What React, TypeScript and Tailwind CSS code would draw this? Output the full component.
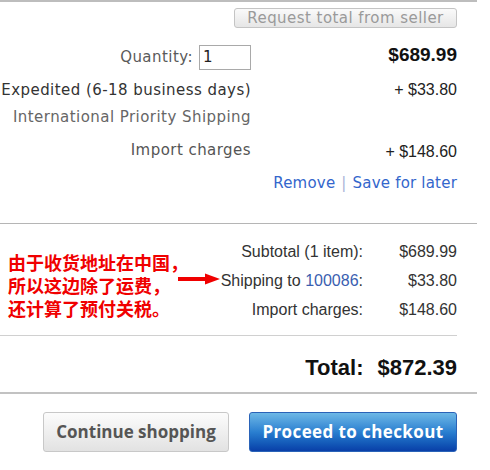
import React from 'react';

const verdana = { fontFamily: '"DejaVu Sans", Verdana, sans-serif', letterSpacing: '0.45px' };
const arial = { fontFamily: '"Liberation Sans", Arial, sans-serif' };

const ItemRow: React.FC<{ left: React.ReactNode; right?: React.ReactNode; className?: string }> = ({ left, right, className }) => (
  <div className={`grid grid-cols-[251px_1fr] items-center ${className ?? ''}`}>
    <div className="flex justify-end items-center text-[15px]" style={verdana}>{left}</div>
    <div className="flex justify-end items-center">{right}</div>
  </div>
);

export default function App() {
  return (
    <div className="w-[490px] h-[470px] bg-white overflow-hidden">
      {/* top rule */}
      <div className="h-[2px] w-[477px] bg-[#bdbdbd]" />

      <div className="pr-[33px]">
        <div className="flex justify-end mt-[6px]">
          <button
            className="h-[20px] w-[223px] rounded-[3px] border border-[#c4c4c4] bg-gradient-to-b from-[#fafafa] to-[#e6e6e6] text-[15px] leading-none text-[#9a9a9a]"
            style={verdana}
          >
            Request total from seller
          </button>
        </div>

        {/* item details */}
        <ItemRow
          className="mt-[17px] h-[25px]"
          left={
            <>
              <span className="text-[#5a5a5a] mr-[6px]">Quantity:</span>
              <div className="w-[52px] h-[25px] border border-[#a9a9a9] px-[3px] flex items-center text-[#222]">1</div>
            </>
          }
          right={<span className="text-[19px] font-bold text-[#111] -mt-[4px]" style={arial}>$689.99</span>}
        />
        <ItemRow
          className="mt-[8px] h-[20px]"
          left={<span className="text-[#333]">Expedited (6-18 business days)</span>}
          right={<span className="text-[16px] text-[#222]" style={arial}>+ $33.80</span>}
        />
        <ItemRow
          className="mt-[8px] h-[20px]"
          left={<span className="text-[#666]">International Priority Shipping</span>}
        />
        <ItemRow
          className="mt-[10px] h-[20px]"
          left={<span className="text-[#555]">Import charges</span>}
          right={<span className="text-[16px] text-[#222] mt-[4px]" style={arial}>+ $148.60</span>}
        />
        <div className="mt-[17px] h-[20px] flex justify-end items-center text-[15px] text-[#3366cc]" style={{ ...verdana, letterSpacing: '0.2px' }}>
          <span>Remove</span>
          <span className="mx-[6px] text-[#aab4d8]">|</span>
          <span>Save for later</span>
        </div>
      </div>

      <div className="mt-[30px] h-[1px] w-[477px] bg-[#b5b5b5]" />

      {/* summary */}
      <div className="flex items-start mt-[19px]">
        <div
          className="w-[178px] pl-[8px] mt-[8px] text-[18px] leading-[23px] font-bold text-[#f00000] whitespace-nowrap"
          style={{ fontFamily: '"Noto Sans CJK SC", "Liberation Sans", sans-serif' }}
        >
          <div>由于收货地址在中国，</div>
          <div>所以这边除了运费，</div>
          <div>还计算了预付关税。</div>
        </div>
        <svg width="42" height="12" viewBox="0 0 42 12" className="shrink-0 mt-[30px]">
          <rect x="0" y="4" width="29" height="4" fill="#f00000" />
          <polygon points="27,0.5 42,6 27,11.5" fill="#f00000" />
        </svg>
        <div className="grid grid-cols-[143px_94px] gap-y-[11px] text-[16px] leading-[18px] text-[#333]" style={arial}>
          <div className="text-right">Subtotal (1 item):</div>
          <div className="text-right">$689.99</div>
          <div className="text-right">
            Shipping to <span className="text-[#3a5eb0]">100086</span>:
          </div>
          <div className="text-right">$33.80</div>
          <div className="text-right">Import charges:</div>
          <div className="text-right">$148.60</div>
        </div>
      </div>

      <div className="mt-[15px] h-[1px] w-[457px] bg-[#d0d0d0]" />

      <div className="mt-[20px] pr-[33px] flex justify-end text-[22px] leading-[24px] font-bold text-[#111]" style={arial}>
        <span>Total:</span>
        <span className="ml-[14px]">$872.39</span>
      </div>

      <div className="mt-[12px] h-[2px] w-[477px] bg-[#c2c2c2]" />

      <div className="mt-[18px] flex pl-[43px] gap-[20px]">
        <button
          className="h-[40px] w-[186px] rounded-[3px] border border-[#c8c8c8] bg-gradient-to-b from-[#fcfcfc] to-[#e2e2e2] text-[17px] font-bold text-[#555]"
          style={{ fontFamily: '"Open Sans", "DejaVu Sans", sans-serif' }}
        >
          Continue shopping
        </button>
        <button
          className="h-[40px] w-[208px] rounded-[3px] border border-[#2a63b8] bg-gradient-to-b from-[#6db8e6] via-[#2a7fd0] to-[#0a3fa8] text-[17px] font-bold text-white tracking-[0.4px]"
          style={{ fontFamily: '"Open Sans", "DejaVu Sans", sans-serif' }}
        >
          Proceed to checkout
        </button>
      </div>
    </div>
  );
}
